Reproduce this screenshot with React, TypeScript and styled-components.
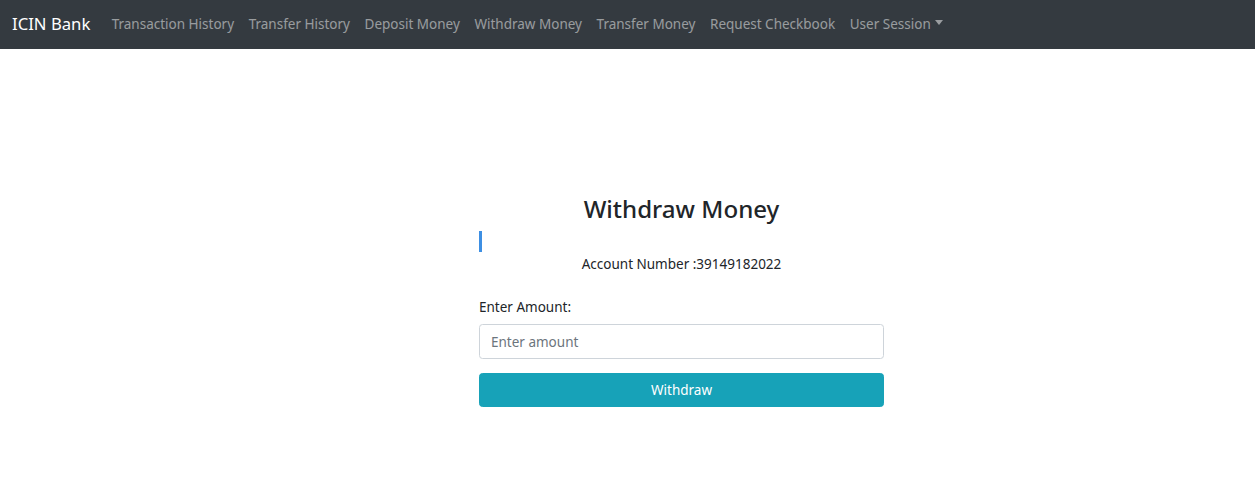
import React from "react";
import styled, { createGlobalStyle } from "styled-components";

const Global = createGlobalStyle`
  html, body { margin: 0; padding: 0; background: #fff; }
  body { font-family: "Noto Sans", "Open Sans", sans-serif; color: #212529; }
  * { box-sizing: border-box; }
`;

const Navbar = styled.nav`
  height: 49px;
  background: #343a40;
  display: flex;
  align-items: center;
  padding: 0 12px 2px;
`;

const Brand = styled.a`
  color: #fff;
  font-size: 16.7px;
  margin-right: 14px;
  text-decoration: none;
  white-space: nowrap;
`;

const NavList = styled.ul`
  display: flex;
  list-style: none;
  margin: 0;
  padding: 0;
`;

const NavLink = styled.a`
  display: flex;
  align-items: center;
  padding: 0 7.3px;
  color: rgba(255, 255, 255, 0.5);
  font-size: 13.5px;
  text-decoration: none;
  white-space: nowrap;
`;

const Caret = styled.span`
  display: inline-block;
  margin-left: 4px;
  border-top: 5px solid rgba(255, 255, 255, 0.5);
  border-left: 4.5px solid transparent;
  border-right: 4.5px solid transparent;
  transform: translateY(-1px);
`;

const Main = styled.main`
  padding-top: 142px;
  padding-left: 479px;
`;

const Column = styled.div`
  width: 405px;
  display: flex;
  flex-direction: column;
`;

const Title = styled.h2`
  margin: 0;
  text-align: center;
  font-size: 24.1px;
  font-weight: 500;
  line-height: 36px;
`;

const Marker = styled.div`
  width: 3px;
  height: 21px;
  background: #3d8fe3;
  margin-top: 4px;
`;

const Account = styled.p`
  margin: 0;
  margin-top: 2px;
  text-align: center;
  font-size: 13.5px;
  line-height: 20px;
`;

const Form = styled.form`
  margin-top: 23px;
  display: flex;
  flex-direction: column;
`;

const Label = styled.label`
  font-size: 13.5px;
  line-height: 20px;
  margin-bottom: 7px;
`;

const Input = styled.input`
  height: 35px;
  border: 1px solid #ced4da;
  border-radius: 3.5px;
  padding: 0 11px;
  font-family: inherit;
  font-size: 13.5px;
  color: #495057;
  &::placeholder { color: #6c757d; }
  outline: none;
`;

const Button = styled.button`
  margin-top: 14px;
  height: 34px;
  border: 1px solid #17a2b8;
  background: #17a2b8;
  color: #fff;
  border-radius: 3.5px;
  font-family: inherit;
  font-size: 13.5px;
`;

const links = [
  "Transaction History",
  "Transfer History",
  "Deposit Money",
  "Withdraw Money",
  "Transfer Money",
  "Request Checkbook",
];

export default function App() {
  return (
    <>
      <Global />
      <Navbar>
        <Brand href="#">ICIN Bank</Brand>
        <NavList>
          {links.map((l) => (
            <li key={l}>
              <NavLink href="#">{l}</NavLink>
            </li>
          ))}
          <li>
            <NavLink href="#">
              User Session
              <Caret />
            </NavLink>
          </li>
        </NavList>
      </Navbar>
      <Main>
        <Column>
          <Title>Withdraw Money</Title>
          <Marker />
          <Account>Account Number :39149182022</Account>
          <Form onSubmit={(e) => e.preventDefault()}>
            <Label>Enter Amount:</Label>
            <Input placeholder="Enter amount" />
            <Button type="submit">Withdraw</Button>
          </Form>
        </Column>
      </Main>
    </>
  );
}
